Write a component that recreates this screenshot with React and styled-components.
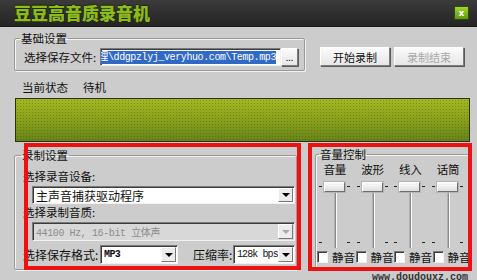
import styled, { createGlobalStyle } from "styled-components";

const GlobalStyle = createGlobalStyle`
  html, body { margin: 0; padding: 0; background: #cccccc; }
  body { font-family: "Noto Sans CJK SC", sans-serif; }
`;

const Window = styled.div`
  width: 477px;
  height: 280px;
  overflow: hidden;
  background: #cccccc;
  color: #111;
  font-size: 11px;
  display: flex;
  flex-direction: column;
`;

const TitleBar = styled.div`
  height: 27px;
  flex: none;
  box-sizing: border-box;
  display: flex;
  align-items: center;
  justify-content: space-between;
  padding: 0 8px 0 14px;
  background: linear-gradient(#3b3b3b, #242424);
  border-bottom: 1px solid #151515;
`;

const Title = styled.h1`
  margin: 0;
  font-size: 17px;
  font-weight: 900;
  line-height: 20px;
  color: #8fba1f;
  text-shadow: 0 1px 0 #1b2a02, 0 -1px 0 #1b2a02, 1px 0 0 #1b2a02;
`;

const CloseButton = styled.div`
  width: 15px;
  height: 14px;
  box-sizing: border-box;
  border: 1px solid #34480a;
  background: linear-gradient(#a3d52e, #5f9612);
  color: #fff;
  font: bold 9px/12px "DejaVu Sans", sans-serif;
  text-align: center;
`;

const Body = styled.div`
  padding: 0 7px 0 14px;
  display: flex;
  flex-direction: column;
`;

const TopRow = styled.div`
  display: flex;
  align-items: flex-start;
  margin-top: 4px;
`;

const GroupBox = styled.fieldset`
  margin: 0;
  box-sizing: border-box;
  width: ${(p) => p.$w}px;
  height: ${(p) => p.$h}px;
  padding: ${(p) => p.$pad};
  border: 1px solid #9a9a9a;
  border-radius: 2px;
  box-shadow: inset 1px 1px 0 #f2f2f2, 1px 1px 0 #f2f2f2;
  min-width: 0;
`;

const Legend = styled.legend`
  padding: 0 1px;
  margin-left: ${(p) => p.$offset || 0}px;
  font-size: 11.5px;
  line-height: 14px;
  color: #111;
`;

const FieldRow = styled.div`
  display: flex;
  align-items: center;
  margin-top: ${(p) => p.$top || 0}px;
`;

const Label = styled.span`
  font-size: ${(p) => p.$size || 11.5}px;
  line-height: 15px;
  white-space: nowrap;
  flex: none;
  width: ${(p) => (p.$w ? `${p.$w}px` : "auto")};
  margin-left: ${(p) => p.$left || 0}px;
`;

const PathField = styled.div`
  width: 181px;
  height: 18px;
  flex: none;
  box-sizing: border-box;
  background: #fff;
  border: 1px solid;
  border-color: #7a7a7a #f2f2f2 #f2f2f2 #7a7a7a;
  box-shadow: inset 1px 1px 0 #3c3c3c;
  overflow: hidden;
  white-space: nowrap;
  display: flex;
  align-items: center;
  justify-content: flex-end;
  padding-right: 4px;
`;

const Selection = styled.span`
  background: #3169c6;
  color: #fff;
  font: 10px/13px "Liberation Mono", "Noto Sans CJK SC", monospace;
  letter-spacing: -0.4px;
`;

const RaisedButton = styled.div`
  box-sizing: border-box;
  flex: none;
  width: ${(p) => p.$w}px;
  height: ${(p) => p.$h}px;
  display: flex;
  align-items: center;
  justify-content: center;
  margin-left: ${(p) => p.$left || 0}px;
  margin-top: ${(p) => p.$top || 0}px;
  background: linear-gradient(#fbfbfb, #e6e6e6);
  border: 1px solid;
  border-color: #ffffff #7d7d7d #7d7d7d #ffffff;
  box-shadow: 1px 1px 0 #5a5a5a;
  font-size: ${(p) => p.$font || 11}px;
  color: ${(p) => (p.$disabled ? "#a8a8a8" : "#111")};
  white-space: nowrap;
`;

const StatusRow = styled.div`
  display: flex;
  gap: 15px;
  margin: 9px 0 0 8px;
  font-size: 11.5px;
  line-height: 15px;
`;

const Display = styled.div`
  margin: 3px 0 0 1px;
  width: 455px;
  height: 44px;
  box-sizing: border-box;
  border: 1px solid #2c3312;
  background-color: #86a01c;
  background-image: radial-gradient(rgba(40, 60, 0, 0.3) 0.7px, transparent 1px),
    linear-gradient(#a3b822 0%, #8aa01c 50%, #66841a 100%);
  background-size: 3px 3px, 100% 100%;
`;

const BottomRow = styled.div`
  position: relative;
  display: flex;
  align-items: flex-start;
  margin-top: 1px;
  height: 128px;
`;

const Stack = styled.div`
  display: flex;
  flex-direction: column;
`;

const Combo = styled.div`
  box-sizing: border-box;
  flex: none;
  width: ${(p) => p.$w}px;
  height: ${(p) => p.$h || 19}px;
  margin-left: ${(p) => p.$left || 0}px;
  margin-top: ${(p) => p.$top || 0}px;
  display: flex;
  align-items: center;
  background: ${(p) => (p.$disabled ? "#d8d8d8" : "#fff")};
  border: 1px solid;
  border-color: #7a7a7a #f2f2f2 #f2f2f2 #7a7a7a;
  box-shadow: inset 1px 1px 0 #3c3c3c;
  padding: 1px 1px 1px 3px;
`;

const ComboText = styled.span`
  flex: 1;
  overflow: hidden;
  white-space: nowrap;
  font: ${(p) => (p.$mono ? '10px "Liberation Mono", "Noto Sans CJK SC", monospace' : '12px "Noto Sans CJK SC", sans-serif')};
  letter-spacing: ${(p) => p.$spacing || 0}px;
  font-weight: ${(p) => (p.$bold ? 700 : 400)};
  color: ${(p) => (p.$disabled ? "#8c8c8c" : "#111")};
`;

const ArrowButton = styled.div`
  width: 15px;
  height: 100%;
  flex: none;
  box-sizing: border-box;
  display: flex;
  align-items: center;
  justify-content: center;
  background: #ececec;
  border: 1px solid;
  border-color: #ffffff #777 #777 #ffffff;
  &::after {
    content: "";
    border-left: 4px solid transparent;
    border-right: 4px solid transparent;
    border-top: 4px solid ${(p) => (p.$disabled ? "#a8a8a8" : "#000")};
  }
`;

const RedMark = styled.div`
  position: absolute;
  top: 0;
  left: ${(p) => p.$left}px;
  width: ${(p) => p.$w}px;
  height: ${(p) => p.$h}px;
  box-sizing: border-box;
  border: 4px solid #ee1111;
  pointer-events: none;
`;

const VolumeGrid = styled.div`
  display: grid;
  grid-template-columns: repeat(4, 37.75px);
  justify-items: center;
  margin-top: 1px;
`;

const ChannelLabel = styled.span`
  font-size: 11.5px;
  line-height: 15px;
`;

const Slider = styled.div`
  position: relative;
  width: 36px;
  height: 68px;
  margin-top: 4px;
`;

const Track = styled.div`
  position: absolute;
  left: 17px;
  top: 6px;
  bottom: 1px;
  width: 1px;
  background: #8a8a8a;
  border-right: 1px solid #fafafa;
  border-left: 1px solid #b0b0b0;
`;

const Thumb = styled.div`
  position: absolute;
  left: 7px;
  top: 1px;
  width: 21px;
  height: 10px;
  box-sizing: border-box;
  background: linear-gradient(#fafafa, #dedede);
  border: 1px solid;
  border-color: #ffffff #6f6f6f #6f6f6f #ffffff;
  box-shadow: 0 0 0 1px #b5b5b5;
`;

const Tick = styled.span`
  position: absolute;
  top: ${(p) => p.$top}px;
  left: ${(p) => p.$left}px;
  width: 3px;
  height: 1px;
  background: #222;
`;

const MuteRow = styled.div`
  display: flex;
  margin: 1px 0 0 1px;
`;

const MuteItem = styled.label`
  width: 38.5px;
  flex: none;
  display: flex;
  align-items: center;
  gap: 4px;
  font-size: 11.5px;
  line-height: 14px;
  white-space: nowrap;
`;

const CheckBox = styled.span`
  width: 11px;
  height: 12px;
  flex: none;
  box-sizing: border-box;
  background: #fff;
  border: 1px solid;
  border-color: #7a7a7a #f2f2f2 #f2f2f2 #7a7a7a;
  box-shadow: inset 1px 1px 0 #3c3c3c;
`;

const Footer = styled.div`
  margin: 1px 0 0 358px;
  font: bold 10px/12px "Liberation Mono", monospace;
  color: #333;
`;

const channels = ["音量", "波形", "线入", "话筒"];

function VolumeSlider() {
  return (
    <Slider>
      <Track />
      <Tick $top={5} $left={2} />
      <Tick $top={5} $left={30} />
      <Tick $top={61} $left={2} />
      <Tick $top={61} $left={30} />
      <Thumb />
    </Slider>
  );
}

function Select({ w, h, left, top, text, mono, bold, disabled, spacing }) {
  return (
    <Combo $w={w} $h={h} $left={left} $top={top} $disabled={disabled}>
      <ComboText $mono={mono} $bold={bold} $disabled={disabled} $spacing={spacing}>
        {text}
      </ComboText>
      <ArrowButton $disabled={disabled} />
    </Combo>
  );
}

export default function App() {
  return (
    <Window>
      <GlobalStyle />
      <TitleBar>
        <Title>豆豆高音质录音机</Title>
        <CloseButton>x</CloseButton>
      </TitleBar>
      <Body>
        <TopRow>
          <GroupBox $w={291} $h={40} $pad="3px 6px 3px 9px">
            <Legend $offset={-4}>基础设置</Legend>
            <FieldRow>
              <Label $w={76}>选择保存文件:</Label>
              <PathField>
                <Selection>管理\ddgpzlyj_veryhuo.com\Temp.mp3</Selection>
              </PathField>
              <RaisedButton $w={17} $h={18} $font={9}>...</RaisedButton>
            </FieldRow>
          </GroupBox>
          <RaisedButton $w={70} $h={19} $left={15} $top={16}>开始录制</RaisedButton>
          <RaisedButton $w={70} $h={19} $left={4} $top={16} $disabled>录制结束</RaisedButton>
        </TopRow>
        <StatusRow>
          <span>当前状态</span>
          <span>待机</span>
        </StatusRow>
        <Display />
        <BottomRow>
          <GroupBox $w={283} $h={122} $pad="7px 6px 0 8px" style={{ marginTop: 5 }}>
            <Legend $offset={-2}>录制设置</Legend>
            <Stack>
              <Label>选择录音设备:</Label>
              <Select w={263} h={18} left={9} top={2} text="主声音捕获驱动程序" />
              <Label style={{ marginTop: 1 }}>选择录制音质:</Label>
              <Select w={263} h={19} left={9} top={2} text="44100 Hz, 16-bit 立体声" mono disabled spacing={-0.4} />
              <FieldRow $top={4}>
                <Label $size={12} $w={77}>选择保存格式:</Label>
                <Select w={78} h={19} text="MP3" mono bold spacing={-0.6} />
                <Label $size={12} $w={40} $left={15}>压缩率:</Label>
                <Select w={62} h={19} text="128k bps" mono spacing={-0.9} />
              </FieldRow>
            </Stack>
          </GroupBox>
          <GroupBox $w={155} $h={123} $pad="0" style={{ marginTop: 4, marginLeft: 18 }}>
            <Legend $offset={3}>音量控制</Legend>
            <VolumeGrid>
              {channels.map((c) => (
                <ChannelLabel key={c}>{c}</ChannelLabel>
              ))}
              {channels.map((c) => (
                <VolumeSlider key={c} />
              ))}
            </VolumeGrid>
            <MuteRow>
              {channels.map((c) => (
                <MuteItem key={c}>
                  <CheckBox />
                  静音
                </MuteItem>
              ))}
            </MuteRow>
          </GroupBox>
          <RedMark $left={10} $w={277} $h={127} />
          <RedMark $left={294} $w={164} $h={128} />
        </BottomRow>
        <Footer>www.doudouxz.com</Footer>
      </Body>
    </Window>
  );
}
